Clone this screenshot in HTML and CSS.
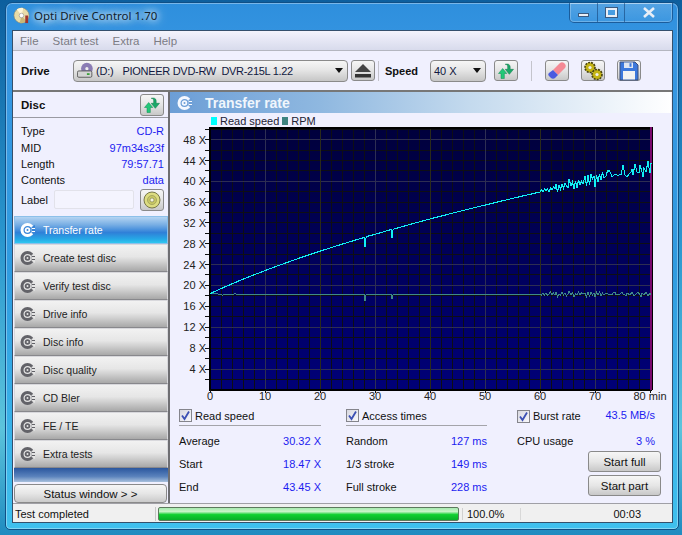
FILE: index.html
```html
<!DOCTYPE html>
<html lang="en">
<head>
<meta charset="utf-8">
<title>Opti Drive Control 1.70</title>
<link rel="stylesheet" href="styles.css">
</head>
<body>
<svg class="defs" width="0" height="0" aria-hidden="true">
  <defs>
    <symbol id="i-sync" viewBox="0 0 24 24">
      <path d="M3 15l5-6 5 6h-3v6H6v-6z" fill="#22c878" stroke="#0f8a50" stroke-width=".6"/>
      <path d="M21 10l-5 6-5-6h3V7c0-2-1-3-3-3 3-1 6 0 6 3v3z" fill="#1aa868" stroke="#0f7a48" stroke-width=".6"/>
    </symbol>
    <symbol id="i-nav" viewBox="0 0 16 16">
      <circle cx="7.5" cy="8" r="7" fill="currentColor"/>
      <circle cx="7.5" cy="8" r="3.4" fill="none" stroke="var(--hole)" stroke-width="1.2"/>
      <circle cx="7.5" cy="8" r="1" fill="var(--hole)"/>
      <path d="M11.5 5l3.5-2v10l-3.5-2z" fill="var(--hole)"/>
      <path d="M12 6.5h3M12 9.5h3" stroke="currentColor" stroke-width="1.2"/>
    </symbol>
  </defs>
</svg>
<div class="window">
  <header class="titlebar">
    <svg class="appicon" viewBox="0 0 18 18" aria-hidden="true">
      <circle cx="9" cy="9" r="8" fill="#e8dca8" stroke="#8a8468" stroke-width=".6"/>
      <path d="M9 9L4 2.5A8 8 0 0 1 11 1z" fill="#fff6d8"/>
      <path d="M9 9l5 6A8 8 0 0 1 7 17z" fill="#c8b878"/>
      <circle cx="9" cy="9" r="2.4" fill="#fff" stroke="#888" stroke-width=".6"/>
      <rect x="13" y="9" width="3" height="8" fill="#a03028"/>
    </svg>
    <span class="apptitle">Opti Drive Control 1.70</span>
    <div class="caption">
      <span class="capbtn capmin"><i class="glyph-min"></i></span>
      <span class="capbtn capmax"><i class="glyph-max"></i></span>
      <span class="capbtn capclose">
        <svg viewBox="0 0 14 11" width="14" height="11" aria-hidden="true"><path d="M2 1l10 9M12 1L2 10" stroke="#e8eef6" stroke-width="2.6" fill="none"/></svg>
      </span>
    </div>
  </header>

  <div class="client">
    <nav class="menubar">
      <span>File</span><span>Start test</span><span>Extra</span><span>Help</span>
    </nav>

    <div class="toolbar">
      <b class="tool-label drive-label">Drive</b>
      <div class="combo drive-combo">
        <svg class="drive-icon" viewBox="0 0 20 18" aria-hidden="true">
          <circle cx="11" cy="7" r="6.5" fill="#8a7cb4"/>
          <circle cx="11" cy="7" r="1.8" fill="#eee"/>
          <rect x=".5" y="9.5" width="16" height="7" rx="1.5" fill="#d4d4d4" stroke="#555"/>
          <rect x="11" y="12" width="3" height="2" fill="#3aa03a"/>
        </svg>
        <span class="drive-letter">(D:)</span>
        <span class="drive-name">PIONEER DVD-RW&nbsp; DVR-215L 1.22</span>
        <i class="arrow"></i>
      </div>
      <button class="tbtn eject" type="button" aria-label="Eject">
        <svg viewBox="0 0 18 14" width="18" height="14" aria-hidden="true"><path d="M9 0l8 8H1z" fill="#444"/><rect x="1" y="10" width="16" height="3.5" fill="#333"/></svg>
      </button>
      <i class="tsep sep-a"></i>
      <b class="tool-label speed-label">Speed</b>
      <div class="combo speed-combo"><span>40 X</span><i class="arrow"></i></div>
      <button class="tbtn sync-btn" type="button" aria-label="Refresh"><svg width="20" height="20" aria-hidden="true"><use href="#i-sync"/></svg></button>
      <i class="tsep sep-b"></i>
      <button class="tbtn eraser-btn" type="button" aria-label="Erase">
        <svg viewBox="0 0 20 20" width="20" height="20" aria-hidden="true">
          <path d="M6 9l7-7c1-1 3-1 4 0l1 1c1 1 1 3 0 4l-7 7z" fill="#f58a94"/>
          <path d="M6 9l5 5-3 3c-1 1-3 1-4 0l-2-2c-1-1-1-2 0-3z" fill="#4a5ae0"/>
        </svg>
      </button>
      <button class="tbtn gears-btn" type="button" aria-label="Settings">
        <svg viewBox="0 0 20 20" width="20" height="20" aria-hidden="true">
          <circle cx="7" cy="6.5" r="5" fill="#c4b414" stroke="#4a4410" stroke-width="1.6" stroke-dasharray="2 1"/>
          <circle cx="7" cy="6.5" r="1.6" fill="#eee"/>
          <circle cx="14" cy="13.5" r="5" fill="#c4b414" stroke="#4a4410" stroke-width="1.6" stroke-dasharray="2 1"/>
          <circle cx="14" cy="13.5" r="1.6" fill="#eee"/>
        </svg>
      </button>
      <button class="tbtn floppy-btn" type="button" aria-label="Save">
        <svg viewBox="0 0 20 20" width="20" height="20" aria-hidden="true">
          <path d="M1 1h15l3 3v15H1z" fill="#3c78dc" stroke="#3a4e7a"/>
          <rect x="5" y="1.5" width="9" height="5.5" fill="#dfe6f2"/>
          <rect x="10.5" y="2.2" width="2" height="3.6" fill="#3c78dc"/>
          <rect x="4" y="10" width="12" height="8.5" fill="#f2f2f2"/>
        </svg>
      </button>
    </div>

    <div class="main">
      <aside class="side">
        <div class="disc-head">
          <b>Disc</b>
          <button class="tbtn disc-sync" type="button" aria-label="Refresh disc"><svg width="20" height="20" aria-hidden="true"><use href="#i-sync"/></svg></button>
        </div>
        <dl class="disc-info">
          <div class="info-row"><dt>Type</dt><dd>CD-R</dd></div>
          <div class="info-row"><dt>MID</dt><dd>97m34s23f</dd></div>
          <div class="info-row"><dt>Length</dt><dd>79:57.71</dd></div>
          <div class="info-row"><dt>Contents</dt><dd>data</dd></div>
          <div class="label-row">
            <span>Label</span>
            <span class="label-field"></span>
            <button class="tbtn label-btn" type="button" aria-label="Disc label">
              <svg viewBox="0 0 18 18" width="18" height="18" aria-hidden="true">
                <circle cx="9" cy="9" r="8" fill="#dcdc80" stroke="#77774a"/>
                <circle cx="9" cy="9" r="4.5" fill="#c8c864" stroke="#a8a860"/>
                <circle cx="9" cy="9" r="2" fill="#f4f4e0" stroke="#77774a" stroke-width=".6"/>
              </svg>
            </button>
          </div>
        </dl>
        <ul class="nav">
          <li class="nav-item active"><svg width="16" height="16" aria-hidden="true"><use href="#i-nav"/></svg><span>Transfer rate</span></li>
          <li class="nav-item"><svg width="16" height="16" aria-hidden="true"><use href="#i-nav"/></svg><span>Create test disc</span></li>
          <li class="nav-item"><svg width="16" height="16" aria-hidden="true"><use href="#i-nav"/></svg><span>Verify test disc</span></li>
          <li class="nav-item"><svg width="16" height="16" aria-hidden="true"><use href="#i-nav"/></svg><span>Drive info</span></li>
          <li class="nav-item"><svg width="16" height="16" aria-hidden="true"><use href="#i-nav"/></svg><span>Disc info</span></li>
          <li class="nav-item"><svg width="16" height="16" aria-hidden="true"><use href="#i-nav"/></svg><span>Disc quality</span></li>
          <li class="nav-item"><svg width="16" height="16" aria-hidden="true"><use href="#i-nav"/></svg><span>CD Bler</span></li>
          <li class="nav-item"><svg width="16" height="16" aria-hidden="true"><use href="#i-nav"/></svg><span>FE / TE</span></li>
          <li class="nav-item"><svg width="16" height="16" aria-hidden="true"><use href="#i-nav"/></svg><span>Extra tests</span></li>
        </ul>
        <div class="strip"></div>
        <button class="status-window" type="button">Status window &gt; &gt;</button>
      </aside>

      <section class="panel">
        <h1 class="panel-head">
          <svg width="16" height="16" aria-hidden="true"><use href="#i-nav"/></svg>
          <span>Transfer rate</span>
        </h1>
        <div class="legend">
          <i class="swatch cyan"></i><span>Read speed</span>
          <i class="swatch teal"></i><span>RPM</span>
        </div>
        <svg class="chart" viewBox="170 127 502 276" width="502" height="276" role="img" aria-label="Transfer rate chart">
          <defs>
            <linearGradient id="plotbg" x1="0" y1="0" x2="0" y2="1">
              <stop offset="0" stop-color="#00003c"/>
              <stop offset="1" stop-color="#000078"/>
            </linearGradient>
          </defs>
          <rect x="209" y="127" width="443" height="263" fill="url(#plotbg)"/>
          <g stroke="#0e0e14" stroke-width="1" shape-rendering="crispEdges">
            <path d="M209 379.5H651M209 358.5H651M209 348.5H651M209 337.5H651M209 316.5H651M209 306.5H651M209 295.5H651M209 274.5H651M209 254.5H651M209 243.5H651M209 233.5H651M209 222.5H651M209 212.5H651M209 202.5H651M209 191.5H651M209 170.5H651M209 160.5H651M209 150.5H651M209 129.5H651"/>
            <path d="M221.5 127V389M232.5 127V389M243.5 127V389M254.5 127V389M276.5 127V389M287.5 127V389M298.5 127V389M309.5 127V389M331.5 127V389M342.5 127V389M353.5 127V389M364.5 127V389M386.5 127V389M397.5 127V389M408.5 127V389M419.5 127V389M441.5 127V389M452.5 127V389M463.5 127V389M474.5 127V389M496.5 127V389M507.5 127V389M518.5 127V389M529.5 127V389M551.5 127V389M562.5 127V389M573.5 127V389M584.5 127V389M606.5 127V389M617.5 127V389M628.5 127V389M639.5 127V389"/>
          </g>
          <g stroke="#2e2e52" stroke-width="1" shape-rendering="crispEdges">
            <path d="M209 369.5H651M209 327.5H651M209 285.5H651M209 264.5H651M209 181.5H651M209 139.5H651"/>
            <path d="M265.5 127V389M375.5 127V389M485.5 127V389M595.5 127V389"/>
          </g>
          <path d="M320.5 127V389M430.5 127V389M540.5 127V389" stroke="#2a2a1a" stroke-width="1" shape-rendering="crispEdges"/>
          <path d="M209.5 127V390M209 127.5H652M209 389.5H652" stroke="#000" stroke-width="2" shape-rendering="crispEdges"/>
          <rect x="650" y="127" width="2" height="263" fill="#7a0a6e"/>
          <path d="M652.5 127V390" stroke="#000" stroke-width="1"/>
          <g stroke="#111" stroke-width="1" shape-rendering="crispEdges">
            <path d="M205 379.5h4M205 369.5h4M205 358.5h4M205 348.5h4M205 337.5h4M205 327.5h4M205 316.5h4M205 306.5h4M205 295.5h4M205 285.5h4M205 274.5h4M205 264.5h4M205 254.5h4M205 243.5h4M205 233.5h4M205 222.5h4M205 212.5h4M205 202.5h4M205 191.5h4M205 181.5h4M205 170.5h4M205 160.5h4M205 150.5h4M205 139.5h4M205 129.5h4"/>
            <path d="M210.5 390v3M265.5 390v3M320.5 390v3M375.5 390v3M430.5 390v3M485.5 390v3M540.5 390v3M595.5 390v3M650.5 390v3"/>
          </g>
          <polyline class="rpm" points="210,293 218,294 220,295 221,294 222,295 223,295 224,294 225,295 226,294 234,294 235,293 236,294 364,294 365,301 366,295 367,294 391,294 392,299 393,295 394,294 540,294 541.5,295 543,293 544.5,295 546,293 547.5,295 549,294 550.5,292 552,295 553.5,293 555,295 556,292 557.5,297 559,294 560.5,295 562,292 563.5,295 565,293 566.5,296 568,294 569,291 571,295 572.5,293 574,297 575.5,294 577,295 578.5,292 580,295 581.5,293 583,294 585,293 586.5,297 588,292 589.5,296 591,292 592.5,295 594,293 595,297 596.5,292 598,295 599.5,292 601,296 602.5,293 604,295 606,293 607.5,294 612,295 613,293 615,292 616,295 620,294 622,292 623,294 625,295 626,296 627,293 630,295 632,292 634,296 636,294 638,292 640,295 641,297 642,293 644,295 646,292 648,296 650,293 651,295"/>
          <polyline class="speed" points="210.3,293.6 221.3,288.5 232.3,283.7 243.3,279.1 254.3,274.7 265.3,270.5 276.3,266.3 287.3,262.4 298.3,258.5 309.3,254.8 320.3,251.1 331.3,247.6 342.3,244.1 353.3,240.7 364,237.5 365,247 366,238 367,236.5 375.3,234.2 386.3,231 391,229.5 392,238 393,230 394,229 408.3,224.9 430.3,218.9 452.3,213.2 474.3,207.7 496.3,202.3 518.3,197 540,192 541.5,190 543,192 544.5,189 546,191 547.5,189 549,192 550.5,188 552,190 553.5,187 555,189 556,184 557.5,192 559,185 560.5,189 562,184 563.5,188 565,183 566.5,186 568,188 569,179 571,186 572.5,182 574,189 575.5,181 577,188 578.5,180 580,185 581.5,181 583,184 585,176 586.5,186 588,175 589.5,185 591,174 592.5,179 594,176 595,187 596.5,175 598,182 599.5,174 601,180 602.5,172 604,178 606,176 607.5,171 609.5,171 611,174 612,177 614,175 616,174 618,176 620,174 621,175 623,165 625,175 627,177 629,174 631,172 632,169 633,175 635,164 637,172 639,173 640,165 642,172 643,177 644,168 646,172 648,161 649,168 650,173 651,163"/>
          <g class="axis">
            <text x="206" y="144">48 X</text><text x="206" y="165">44 X</text><text x="206" y="185">40 X</text><text x="206" y="206">36 X</text><text x="206" y="227">32 X</text><text x="206" y="248">28 X</text><text x="206" y="269">24 X</text><text x="206" y="289">20 X</text><text x="206" y="310">16 X</text><text x="206" y="331">12 X</text><text x="206" y="352">8 X</text><text x="206" y="373">4 X</text>
          </g>
          <g class="axis axis-x">
            <text x="210" y="400">0</text><text x="265" y="400">10</text><text x="320" y="400">20</text><text x="375" y="400">30</text><text x="430" y="400">40</text><text x="485" y="400">50</text><text x="540" y="400">60</text><text x="595" y="400">70</text><text x="650" y="400">80 min</text>
          </g>
        </svg>
        <div class="stats">
          <div class="stat-col col-a">
            <label class="check-row"><i class="check"><svg viewBox="0 0 11 11" width="11" height="11" aria-hidden="true"><path d="M2 5.5l2.5 3.5L9 1.5" fill="none" stroke="#3c50b4" stroke-width="1.8"/></svg></i>Read speed</label>
            <div class="stat-row"><span>Average</span><b>30.32 X</b></div>
            <div class="stat-row"><span>Start</span><b>18.47 X</b></div>
            <div class="stat-row"><span>End</span><b>43.45 X</b></div>
          </div>
          <div class="stat-col col-b">
            <label class="check-row"><i class="check"><svg viewBox="0 0 11 11" width="11" height="11" aria-hidden="true"><path d="M2 5.5l2.5 3.5L9 1.5" fill="none" stroke="#3c50b4" stroke-width="1.8"/></svg></i>Access times</label>
            <div class="stat-row"><span>Random</span><b>127 ms</b></div>
            <div class="stat-row"><span>1/3 stroke</span><b>149 ms</b></div>
            <div class="stat-row"><span>Full stroke</span><b>228 ms</b></div>
          </div>
          <div class="stat-col col-c">
            <div class="burst-row">
              <label class="check-row plain"><i class="check"><svg viewBox="0 0 11 11" width="11" height="11" aria-hidden="true"><path d="M2 5.5l2.5 3.5L9 1.5" fill="none" stroke="#3c50b4" stroke-width="1.8"/></svg></i>Burst rate</label>
              <b>43.5 MB/s</b>
            </div>
            <div class="stat-row"><span>CPU usage</span><b>3 %</b></div>
            <button class="start" type="button">Start full</button>
            <button class="start" type="button">Start part</button>
          </div>
        </div>
      </section>
    </div>

    <footer class="statusbar">
      <span class="st-text">Test completed</span>
      <div class="st-progress"><div class="st-fill"></div></div>
      <span class="st-pct">100.0%</span>
      <span class="st-time">00:03</span>
      <span class="st-grip"></span>
    </footer>
  </div>
</div>
</body>
</html>
```

FILE: styles.css
```css
* { box-sizing: border-box; }
html, body { margin: 0; height: 100%; }
body {
  width: 682px;
  height: 535px;
  overflow: hidden;
  background: linear-gradient(180deg, #0d5f9e 0%, #2a97cf 45%, #5cc4dc 80%, #1f8bc0 100%);
  font: 11px "Liberation Sans", Arial, sans-serif;
  color: #111;
  padding: 2px 3px 5px 5px;
}
.defs { position: absolute; }
button { font: inherit; color: inherit; padding: 0; margin: 0; }
.window {
  width: 674px;
  height: 528px;
  border: 1px solid #0f4f86;
  border-radius: 7px 7px 5px 5px;
  background: linear-gradient(180deg, #2e8fdd 0%, #3796e2 10%, #2f9be0 50%, #3fc0ee 100%);
  padding: 0 5px 6px 6px;
  box-shadow: inset 0 0 0 1px rgba(255,255,255,.35);
  display: flex;
  flex-direction: column;
}

/* title bar */
.titlebar { height: 27px; display: flex; align-items: center; flex: none; }
.appicon { width: 17px; height: 17px; margin: -2px 0 0 1px; flex: none; }
.apptitle {
  margin: -2px 0 0 4px;
  font: 11.5px "Noto Sans", sans-serif;
  color: #10202c;
  text-shadow: 0 0 6px #fff, 0 0 10px #fff, 0 0 14px #cfe8fa;
  white-space: nowrap;
}
.caption {
  margin: -7px 0 0 auto;
  display: flex;
  width: 104px;
  height: 20px;
  border: 1px solid rgba(10,50,100,.55);
  border-top: 0;
  border-radius: 0 0 5px 5px;
  box-shadow: 0 0 0 1px rgba(255,255,255,.25) inset;
}
.capbtn { display: flex; align-items: center; justify-content: center; border-right: 1px solid rgba(10,50,100,.5); background: linear-gradient(180deg, rgba(255,255,255,.18), rgba(255,255,255,.05)); }
.capmin { width: 28px; }
.capmax { width: 27px; }
.capclose { flex: 1; border-right: 0; }
.glyph-min { display: block; width: 11px; height: 4px; margin-top: 5px; background: #e8eef6; border: 1px solid #3a5a80; }
.glyph-max { display: block; width: 11px; height: 9px; background: transparent; border: 2px solid #e8eef6; outline: 1px solid #3a5a80; }

/* client */
.client {
  flex: 1;
  min-height: 0;
  background: #f0f0fe;
  border: 1px solid #35506c;
  display: flex;
  flex-direction: column;
}
.menubar {
  height: 20px;
  flex: none;
  display: flex;
  align-items: center;
  padding-left: 7px;
  gap: 14px;
  font-size: 11.5px;
  color: #7c7c84;
  background: linear-gradient(180deg, #f4f4fc 0%, #e8e9f6 40%, #d8dbec 100%);
  border-bottom: 1px solid #b4b6c0;
}
.toolbar {
  height: 41px;
  flex: none;
  display: flex;
  align-items: center;
  border-bottom: 2px solid #777;
}
.tool-label { font-size: 11.5px; }
.drive-label { margin-left: 8px; width: 52px; }
.combo {
  height: 22px;
  display: flex;
  align-items: center;
  border: 1px solid #8a8a8a;
  border-radius: 4px;
  background: linear-gradient(180deg, #f6f6f6 0%, #e6e6e6 45%, #c6c6c6 100%);
  font-size: 11px;
  color: #111840;
}
.drive-combo { width: 275px; padding-left: 3px; }
.drive-icon { width: 18px; height: 17px; flex: none; }
.drive-letter { margin-left: 1px; letter-spacing: -.2px; }
.drive-name { margin-left: 9px; white-space: nowrap; letter-spacing: -.3px; }
.speed-combo { width: 56px; margin-left: 13px; padding-left: 3px; }
.arrow {
  display: block;
  margin-left: auto;
  margin-right: 4px;
  width: 0;
  height: 0;
  border: 4px solid transparent;
  border-top: 5px solid #111;
  border-bottom: 0;
}
.tbtn {
  width: 24px;
  height: 21px;
  display: flex;
  align-items: center;
  justify-content: center;
  border: 1px solid #8a8a8a;
  border-radius: 3px;
  background: linear-gradient(180deg, #f6f6f6 0%, #e4e4e4 50%, #c8c8c8 100%);
  flex: none;
}
.eject { margin-left: 3px; }
.tsep { display: block; width: 1px; height: 20px; background: #c4c4cc; flex: none; }
.sep-a { margin-left: 3px; }
.speed-label { margin-left: 6px; width: 32px; font-size: 11px; }
.sync-btn { margin-left: 8px; }
.sep-b { margin-left: 13px; }
.eraser-btn { margin-left: 13px; }
.gears-btn { margin-left: 12px; }
.floppy-btn { margin-left: 12px; }

.main { flex: 1; min-height: 0; display: flex; }
.side { width: 155px; flex: none; display: flex; flex-direction: column; }
.disc-head {
  height: 26px;
  flex: none;
  display: flex;
  align-items: center;
  justify-content: space-between;
  padding: 1px 4px 0 8px;
  border-bottom: 1px solid #9a9aa2;
  font-size: 11.5px;
}
.disc-head .tbtn { width: 24px; height: 22px; }
.disc-info { margin: 0; height: 98px; flex: none; padding: 5px 4px 0 8px; }
.info-row { display: flex; justify-content: space-between; height: 16.4px; align-items: center; }
.info-row dd { margin: 0; color: #1c1cf0; }
.label-row { display: flex; align-items: center; }
.label-field { width: 80px; height: 19px; margin-left: 6px; border: 1px solid #e2e2ea; background: #f4f4fe; border-radius: 2px; }
.label-btn { width: 24px; height: 22px; margin-left: 6px; }
.nav { list-style: none; margin: 0; padding: 0 0 0 1px; flex: none; }
.nav-item {
  height: 28px;
  display: flex;
  align-items: center;
  padding-left: 5px;
  border: 1px solid #d8d8dc;
  border-bottom: 1px solid #88888c;
  color: #222;
  font-size: 10.5px;
  --hole: #e4e4e4;
  background: linear-gradient(180deg, #f2f2f2 0%, #e6e6e6 45%, #d0d0d0 65%, #a8a8a8 100%);
}
.nav-item svg { color: #626268; flex: none; }
.nav-item span { margin-left: 7px; }
.nav-item.active {
  color: #fff;
  --hole: #3a86d8;
  background: linear-gradient(180deg, #b4d4f2 0%, #78aee4 30%, #2f80d8 60%, #26a8e6 85%, #30c8f0 100%);
  border-color: #8cc0ea;
}
.nav-item.active svg { color: #fff; }
.strip { height: 14px; flex: none; margin-left: 1px; background: linear-gradient(180deg, #2a569e 0%, #5a82bc 60%, #a8c0dc 100%); }
.status-window {
  height: 19px;
  margin: 2px 1px 0 1px;
  flex: none;
  border: 1px solid #8a8a8a;
  border-radius: 4px;
  background: linear-gradient(180deg, #f6f6f6 0%, #e6e6e6 50%, #cacaca 100%);
  font-size: 11.5px;
}

.panel {
  flex: 1;
  min-width: 0;
  display: flex;
  flex-direction: column;
  border-left: 2px solid #6e6e72;
}
.panel-head {
  margin: 0 1px 0 0;
  height: 21px;
  flex: none;
  display: flex;
  align-items: center;
  padding-left: 7px;
  font-size: 14px;
  font-weight: bold;
  color: #f0f6fc;
  background: linear-gradient(90deg, #6c9ed6 0%, #8fb8e0 30%, #c4daee 60%, #ffffff 100%);
  --hole: #6c9ed6;
}
.panel-head svg { color: #f4f8ff; flex: none; }
.panel-head span { margin-left: 12px; }
.legend { height: 14px; flex: none; display: flex; align-items: center; padding: 1px 0 0 41px; font-size: 11px; color: #223; }
.swatch { display: block; width: 6px; height: 8px; margin-right: 3px; flex: none; }
.swatch.cyan { background: #00ffff; }
.swatch.teal { background: #3f8480; margin-left: 3px; }
.chart { display: block; flex: none; }
.rpm { fill: none; stroke: #3f8a88; stroke-width: 1; shape-rendering: crispEdges; }
.speed { fill: none; stroke: #12f0f4; stroke-width: 1.1; shape-rendering: crispEdges; }
.axis text { font: 11px "Liberation Sans", Arial, sans-serif; fill: #222; text-anchor: end; }
.axis-x text { text-anchor: middle; }

.stats { flex: 1; min-height: 0; display: flex; padding-left: 9px; }
.stat-col { display: flex; flex-direction: column; }
.col-a { width: 142px; }
.col-b { width: 141px; margin-left: 25px; }
.col-c { width: 138px; margin-left: 30px; }
.check-row { height: 23px; display: flex; align-items: center; padding-top: 3px; border-bottom: 1px solid #a4a4aa; margin-bottom: 3px; font-size: 11px; }
.check-row.plain { border: 0; margin: 0; }
.check {
  width: 13px;
  height: 13px;
  margin-right: 3px;
  display: flex;
  align-items: center;
  justify-content: center;
  border: 1px solid #85858c;
  background: linear-gradient(135deg, #d8d8e0, #f8f8fc);
}
.stat-row { height: 23px; display: flex; justify-content: space-between; align-items: center; font-size: 11px; }
.stat-row b, .burst-row b { font-weight: normal; color: #1c1cf0; }
.burst-row { height: 23px; display: flex; justify-content: space-between; align-items: center; font-size: 11px; margin-bottom: 3px; }
.start {
  width: 73px;
  height: 21px;
  margin: 0 0 3px auto;
  flex: none;
  position: relative;
  left: 6px;
  border: 1px solid #8a8a8a;
  border-radius: 3px;
  background: linear-gradient(180deg, #f6f6f6 0%, #e6e6e6 50%, #c8c8c8 100%);
  font-size: 11.5px;
}
.col-c .stat-row + .start { margin-top: -1px; }

.statusbar {
  height: 19px;
  flex: none;
  display: flex;
  align-items: center;
  background: #f0f0f0;
  font-size: 11px;
  border-top: 1px solid #a0a0a6;
  padding-top: 1px;
}
.st-text { width: 142px; padding-left: 2px; flex: none; }
.st-progress {
  width: 305px;
  height: 14px;
  flex: none;
  border-left: 1px solid #c8c8c8;
  padding: 0 1px 0 2px;
}
.st-fill {
  height: 100%;
  border: 1px solid #5c7a5c;
  border-radius: 2px;
  background: linear-gradient(180deg, #a8eab0 0%, #c8f4c8 30%, #10d030 55%, #08b028 100%);
}
.st-pct { width: 58px; flex: none; padding-left: 4px; border-left: 1px solid #d0d0d0; margin-left: 2px; }
.st-time { width: 123px; flex: none; text-align: right; padding-right: 2px; border-left: 1px solid #d8d8d8; }
.st-grip { flex: 1; }
```
